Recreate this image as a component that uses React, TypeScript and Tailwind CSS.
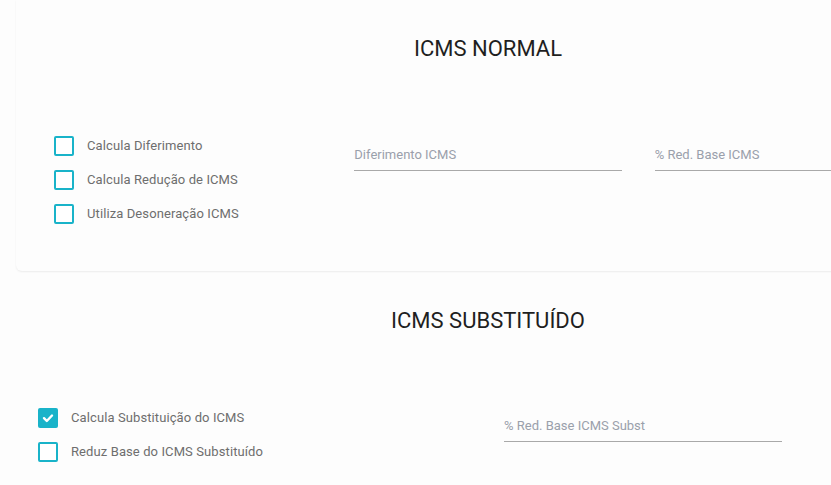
const CYAN = "#19b3c9";

type CheckProps = { label: string; checked?: boolean };

const Check = ({ label, checked }: CheckProps) => {
  return (
    <label className="flex items-center h-5 gap-[13px] cursor-pointer">
      {checked ? (
        <span className="w-5 h-5 rounded-[2px] bg-[#19b3c9] flex items-center justify-center">
          <svg width="12" height="12" viewBox="0 0 12 12">
            <path
              d="M2 6.2 L4.8 9 L10 3.5"
              fill="none"
              stroke="#fff"
              strokeWidth="2.4"
              strokeLinecap="round"
              strokeLinejoin="round"
            />
          </svg>
        </span>
      ) : (
        <span className="w-5 h-5 rounded-[2px] border-2 border-[#19b3c9] bg-white" />
      )}
      <span className="text-[13px] leading-4 text-[#6e6e6e] tracking-[0.1px]">{label}</span>
    </label>
  );
};

const Field = ({ label, className }: { label: string; className?: string }) => {
  return (
    <div className={className}>
      <div className="pb-[7px] border-b border-[#a9a9a9] text-[13px] leading-4 text-[#9aa0ab]">
        {label}
      </div>
    </div>
  );
};

export default function App() {
  return (
    <div
      className="min-h-screen w-[831px] overflow-hidden bg-[#fdfdfd]"
      style={{ fontFamily: "Roboto, 'Liberation Sans', sans-serif" }}
      data-accent={CYAN}
    >
      {/* ICMS normal */}
      <section className="ml-4 w-[944px] rounded-b-md bg-[#fdfdfd] shadow-[0_1px_2px_rgba(0,0,0,0.07)] pt-9 pb-[47px] px-[38px]">
        <h2 className="text-center text-[22px] leading-[26px] text-[#1f1f1f]">
          ICMS NORMAL
        </h2>
        <div className="mt-[74px] grid grid-cols-3 gap-[33px] items-start">
          <div className="flex flex-col gap-[14px]">
            <Check label="Calcula Diferimento" />
            <Check label="Calcula Redução de ICMS" />
            <Check label="Utiliza Desoneração ICMS" />
          </div>
          <Field label="Diferimento ICMS" className="pt-[11px]" />
          <Field label="% Red. Base ICMS" className="pt-[11px]" />
        </div>
      </section>

      {/* ICMS substituido */}
      <section className="ml-4 w-[944px] pt-[37px] px-[22px] pb-6">
        <h2 className="text-center text-[22px] leading-[26px] text-[#1f1f1f]">
          ICMS SUBSTITUÍDO
        </h2>
        <div className="mt-[74px] flex items-start">
          <div className="w-[466px] flex flex-col gap-[14px]">
            <Check label="Calcula Substituição do ICMS" checked />
            <Check label="Reduz Base do ICMS Substituído" />
          </div>
          <Field label="% Red. Base ICMS Subst" className="w-[278px] pt-[10px]" />
        </div>
      </section>
    </div>
  );
}
